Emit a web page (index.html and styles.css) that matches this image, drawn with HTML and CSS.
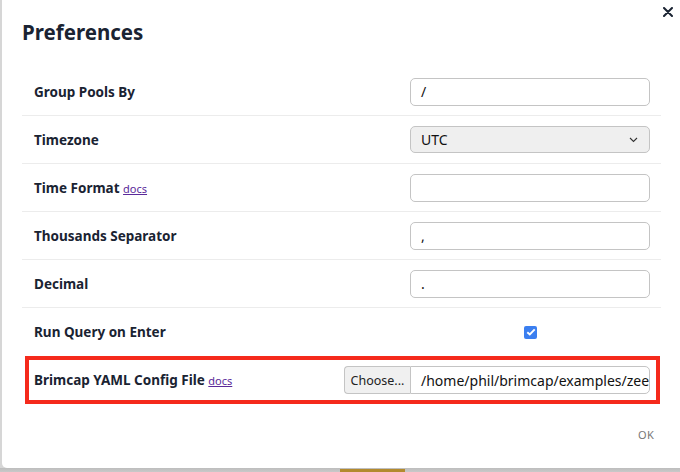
FILE: index.html
```html
<!DOCTYPE html>
<html>
<head>
<meta charset="utf-8">
<link rel="stylesheet" href="styles.css">
</head>
<body>
<div class="backdrop">
  <div class="modal">
    <div class="modal-head">
      <h1 class="title">Preferences</h1>
      <button class="close" aria-label="Close">
        <svg width="10" height="10" viewBox="0 0 10 10"><path d="M1 1 L9 9 M9 1 L1 9" stroke="#1a2332" stroke-width="2" stroke-linecap="round"/></svg>
      </button>
    </div>
    <div class="rows">
      <div class="row">
        <div class="label">Group Pools By</div>
        <div class="control"><div class="input">/</div></div>
      </div>
      <div class="row">
        <div class="label">Timezone</div>
        <div class="control">
          <div class="input select">
            <span>UTC</span>
            <svg width="9" height="6" viewBox="0 0 9 6"><path d="M1 1 L4.5 4.5 L8 1" fill="none" stroke="#333" stroke-width="1.1"/></svg>
          </div>
        </div>
      </div>
      <div class="row">
        <div class="label">Time Format <a class="docs" href="#">docs</a></div>
        <div class="control"><div class="input"></div></div>
      </div>
      <div class="row">
        <div class="label">Thousands Separator</div>
        <div class="control"><div class="input">,</div></div>
      </div>
      <div class="row">
        <div class="label">Decimal</div>
        <div class="control"><div class="input">.</div></div>
      </div>
      <div class="row">
        <div class="label">Run Query on Enter</div>
        <div class="control center">
          <span class="checkbox">
            <svg width="10" height="8" viewBox="0 0 10 8"><path d="M1.3 4.2 L3.8 6.5 L8.7 1.3" fill="none" stroke="#fff" stroke-width="1.9"/></svg>
          </span>
        </div>
      </div>
      <div class="row row-last">
        <div class="label">Brimcap YAML Config File <a class="docs" href="#">docs</a></div>
        <div class="file">
          <span class="choose">Choose...</span>
          <span class="path">/home/phil/brimcap/examples/zee</span>
        </div>
      </div>
    </div>
    <div class="footer"><span class="ok">OK</span></div>
  </div>
  <div class="under"><span class="tab"></span></div>
</div>
</body>
</html>
```

FILE: styles.css
```css
* { box-sizing: border-box; }
html, body { margin: 0; padding: 0; }
body {
  width: 680px;
  height: 472px;
  overflow: hidden;
  background: #d6d6d6;
  font-family: "Noto Sans", "DejaVu Sans", sans-serif;
  color: #1a2332;
}
.backdrop {
  display: flex;
  flex-direction: column;
  height: 472px;
}
.modal {
  margin-left: 2px;
  width: 690px;
  height: 468px;
  background: #fff;
  border-radius: 0 0 0 5px;
  display: flex;
  flex-direction: column;
  flex: none;
}
.modal-head {
  height: 68px;
  display: flex;
  justify-content: space-between;
  align-items: flex-start;
  padding-left: 20px;
}
.title {
  margin: 0;
  padding-top: 17px;
  font-size: 20.5px;
  line-height: 30px;
  font-weight: 700;
  color: #1a2332;
}
.close {
  border: 0;
  background: none;
  padding: 0;
  margin: 7px 19px 0 0;
  width: 10px;
  height: 10px;
  display: flex;
}
.rows {
  width: 639px;
  margin-left: 20px;
  display: flex;
  flex-direction: column;
}
.row {
  height: 48px;
  display: flex;
  align-items: center;
  justify-content: space-between;
  padding: 0 11px 0 12px;
  border-bottom: 1px solid #ececec;
}
.row:nth-child(6) { border-bottom: 0; }
.label {
  font-size: 13.5px;
  font-weight: 700;
  color: #1a2332;
  white-space: nowrap;
}
.docs {
  font-size: 11px;
  font-weight: 400;
  color: #5b2a9a;
  text-decoration: underline;
}
.control {
  width: 240px;
  display: flex;
}
.control.center { justify-content: center; }
.input {
  width: 240px;
  height: 28px;
  border: 1px solid #c4c4c4;
  border-radius: 5px;
  background: #fff;
  padding: 0 10px;
  display: flex;
  align-items: center;
  font-size: 14px;
  color: #111;
}
.select {
  height: 27px;
  background: #efefef;
  justify-content: space-between;
  padding-right: 11px;
}
.checkbox {
  width: 13px;
  height: 13px;
  border-radius: 2px;
  background: #3b7ff0;
  display: flex;
  align-items: center;
  justify-content: center;
  margin-left: 1px;
}
.row-last {
  margin: 0 1px 0 3px;
  border: 4px solid #f52a1c;
  padding: 0 6px 0 5px;
}
.file {
  display: flex;
  width: 306px;
  height: 28px;
  font-size: 14px;
}
.choose {
  width: 66px;
  flex: none;
  display: flex;
  align-items: center;
  justify-content: center;
  background: #f0f0f0;
  border: 1px solid #c4c4c4;
  border-right: 0;
  border-radius: 4px 0 0 4px;
  font-size: 12.5px;
  color: #222;
}
.path {
  flex: 1;
  min-width: 0;
  overflow: hidden;
  white-space: nowrap;
  border: 1px solid #c4c4c4;
  border-radius: 0 5px 5px 0;
  padding: 0 8px 0 10px;
  display: flex;
  align-items: center;
  color: #111;
}
.footer {
  flex: 1;
  display: flex;
  justify-content: flex-end;
  align-items: flex-start;
  padding: 23px 28px 0 0;
  width: 680px;
}
.ok {
  font-size: 11px;
  color: #777;
  letter-spacing: 0.3px;
}
.under {
  flex: 1;
  background: linear-gradient(#bdbdbd, #c9c9c9);
  position: relative;
}
.tab {
  position: absolute;
  left: 340px;
  width: 65px;
  top: 1px;
  bottom: 0;
  background: #b38a2e;
}
```
